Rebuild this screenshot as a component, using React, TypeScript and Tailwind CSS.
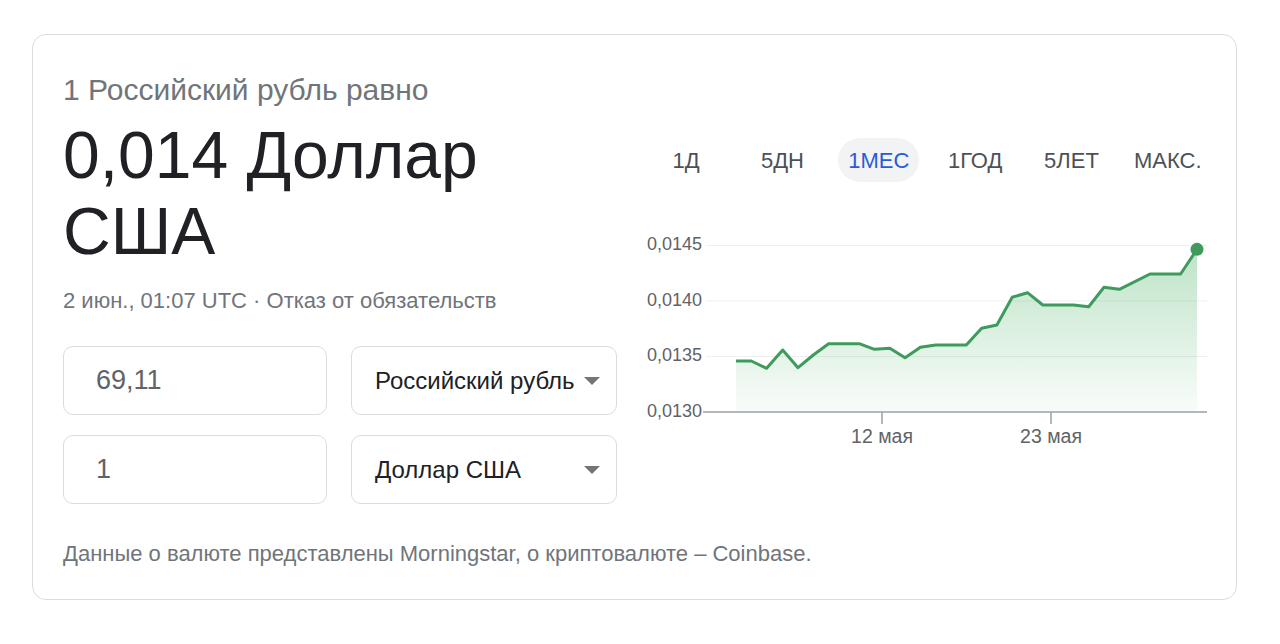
import React from "react";

const pts: [number, number][] = [
  [736, 361], [751.3, 361], [766.6, 368.3], [782.7, 350], [798, 367.7],
  [813.3, 355], [828.6, 343.7], [859.2, 343.7], [874.5, 349.3], [889.8, 348.3],
  [905.1, 357.7], [920.4, 347.3], [935.7, 345], [966.3, 345], [981.6, 328.3],
  [996.9, 325], [1012.2, 297.3], [1027.5, 292.7], [1042.8, 305], [1073.4, 305],
  [1088.7, 306.7], [1104, 287.3], [1119.4, 289.3], [1150, 274], [1180.6, 274],
  [1197, 249.3],
];

const tabs = ["1Д", "5ДН", "1МЕС", "1ГОД", "5ЛЕТ", "МАКС."];

const Chart = () => {
  const line = pts.map(([x, y]) => `${x},${y}`).join(" ");
  const area = `M736,412 L${line.replace(/ /g, " L")} L1197,412 Z`;
  const grid = [
    { y: 245.5, label: "0,0145" },
    { y: 301, label: "0,0140" },
    { y: 356.5, label: "0,0135" },
  ];
  return (
    <svg viewBox="638 200 578 260" width={578} height={260} className="mt-[18px] block">
      <defs>
        <linearGradient id="fill" x1="0" y1="0" x2="0" y2="1">
          <stop offset="0%" stopColor="#34a853" stopOpacity="0.32" />
          <stop offset="100%" stopColor="#34a853" stopOpacity="0.03" />
        </linearGradient>
      </defs>
      {grid.map((g) => (
        <g key={g.label}>
          <line x1={706} x2={1207} y1={g.y} y2={g.y} stroke="#efefef" strokeWidth={1} />
          <text x={702} y={g.y} textAnchor="end" dominantBaseline="middle" fontSize={18} fill="#5f6368" fontFamily="'Liberation Sans', Arial, sans-serif">
            {g.label}
          </text>
        </g>
      ))}
      <path d={area} fill="url(#fill)" />
      <line x1={703} x2={1207} y1={412} y2={412} stroke="#9aa0a6" strokeWidth={1.5} />
      <text x={702} y={412} textAnchor="end" dominantBaseline="middle" fontSize={18} fill="#5f6368" fontFamily="'Liberation Sans', Arial, sans-serif">
        0,0130
      </text>
      <line x1={882} x2={882} y1={412} y2={424} stroke="#9aa0a6" strokeWidth={1.5} />
      <line x1={1051} x2={1051} y1={412} y2={424} stroke="#9aa0a6" strokeWidth={1.5} />
      <text x={882} y={438} textAnchor="middle" dominantBaseline="middle" fontSize={19.5} fill="#5f6368" fontFamily="'Liberation Sans', Arial, sans-serif">
        12 мая
      </text>
      <text x={1051} y={438} textAnchor="middle" dominantBaseline="middle" fontSize={19.5} fill="#5f6368" fontFamily="'Liberation Sans', Arial, sans-serif">
        23 мая
      </text>
      <polyline points={line} fill="none" stroke="#3f9b5c" strokeWidth={3} strokeLinejoin="round" />
      <circle cx={1197} cy={249.3} r={6.5} fill="#3f9b5c" />
    </svg>
  );
};

const Caret = () => (
  <svg width="16" height="8" viewBox="0 0 16 8">
    <polygon points="0,0 16,0 8,8" fill="#757575" />
  </svg>
);

export default function App() {
  return (
    <div className="bg-white pl-[32px] pt-[34px] font-['Liberation_Sans',Arial,sans-serif]">
      <div className="w-[1205px] rounded-[14px] border border-[#dadce0] pl-[30px] pr-[20px] pt-[37px] pb-[32px]">
        <div className="flex">
          {/* left side: rate + converter */}
          <div className="w-[554px]">
            <div className="text-[30px] leading-[36px] text-[#70757a]">1 Российский рубль равно</div>
            <div className="mt-[9px] text-[66px] leading-[76px] text-[#202124]">
              0,014 Доллар
              <br />
              США
            </div>
            <div className="mt-[19px] text-[22px] leading-[26px] text-[#70757a]">
              2 июн., 01:07 UTC · Отказ от обязательств
            </div>
            <div className="mt-[32px] grid grid-cols-[264px_266px] gap-x-[24px] gap-y-[20px]">
              <div className="flex h-[69px] items-center rounded-[10px] border border-[#dadce0] pl-[32px] text-[27px] text-[#5f6368]">
                69,11
              </div>
              <div className="flex h-[69px] items-center justify-between rounded-[10px] border border-[#dadce0] pl-[23px] pr-[16px] text-[24px] text-[#202124]">
                <span>Российский рубль</span>
                <Caret />
              </div>
              <div className="flex h-[69px] items-center rounded-[10px] border border-[#dadce0] pl-[32px] text-[27px] text-[#5f6368]">
                1
              </div>
              <div className="flex h-[69px] items-center justify-between rounded-[10px] border border-[#dadce0] pl-[23px] pr-[16px] text-[24px] text-[#202124]">
                <span>Доллар США</span>
                <Caret />
              </div>
            </div>
          </div>
          {/* right side: period tabs + chart */}
          <div className="ml-[21px] w-[578px]">
            <div className="mt-[66px] flex">
              {tabs.map((t) => (
                <div key={t} className="flex w-[96.4px] justify-center">
                  <span
                    className={
                      t === "1МЕС"
                        ? "flex h-[44px] w-[81px] items-center justify-center rounded-full bg-[#f1f3f4] text-[22px] text-[#2a5bd7]"
                        : "flex h-[44px] items-center justify-center text-[22px] text-[#4d5156]"
                    }
                  >
                    {t}
                  </span>
                </div>
              ))}
            </div>
            <Chart />
          </div>
        </div>
        <div className="mt-[37px] text-[22px] leading-[26px] text-[#70757a]">
          Данные о валюте представлены Morningstar, о криптовалюте – Coinbase.
        </div>
      </div>
    </div>
  );
}
